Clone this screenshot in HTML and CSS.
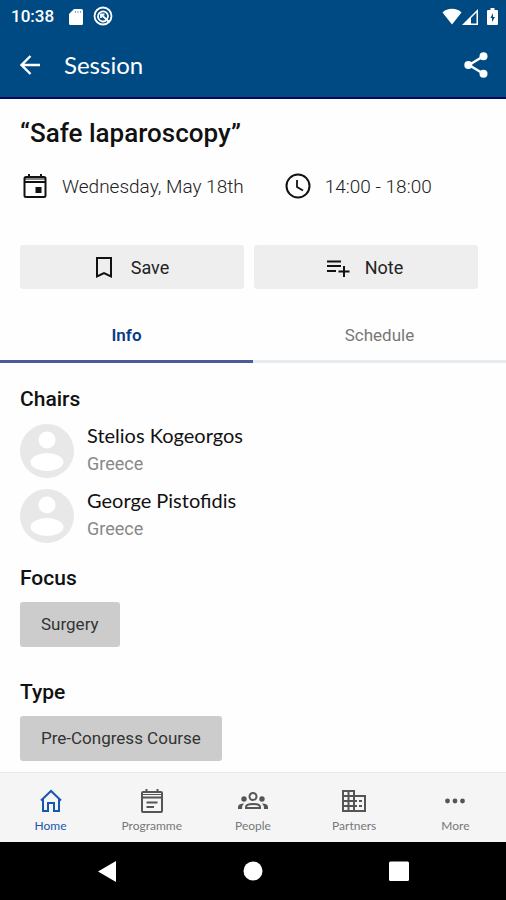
FILE: index.html
```html
<!DOCTYPE html>
<html lang="en">
<head>
<meta charset="utf-8">
<meta name="viewport" content="width=device-width, initial-scale=1">
<title>Session</title>
<link rel="stylesheet" href="styles.css">
</head>
<body>
<div class="app">
  <header class="header">
    <div class="status">
      <span class="status-time">10:38</span>
      <svg class="status-card" viewBox="0 0 14 17" aria-hidden="true"><path fill="currentColor" d="M5 1h7.500q1.500 0 1.500 1.500v13q0 1.500-1.500 1.500h-11Q0 17 0 15.500V6z"/><path stroke="#8aa9c6" d="M6.500 3v2M9 3v2M11.500 3v2"/></svg>
      <svg class="status-ring" viewBox="0 0 20 20" fill="none" stroke="currentColor" aria-hidden="true"><circle cx="10" cy="10" r="8.500" stroke-width="1.800"/><path stroke-width="1.800" d="M13 14.500A5 5 0 1 1 15 10q0 2-1.500 3.500L8 8.500"/><path stroke-width="1.800" d="M8 12V8.500h3.500M13 13l3 3"/></svg>
      <svg class="status-wifi" viewBox="0 0 20 17" aria-hidden="true"><path fill="currentColor" d="M10 16.500L.5 4.500C3 2 6 .8 10 .8s7 1.200 9.500 3.700z"/></svg>
      <svg class="status-signal" viewBox="0 0 17 17" aria-hidden="true"><path fill="currentColor" fill-rule="evenodd" d="M0 17L16 1v16zM9 10v5.500h5.500V4.500z"/></svg>
      <svg class="status-battery" viewBox="0 0 11 17" aria-hidden="true"><path fill="currentColor" fill-rule="evenodd" d="M3.500 0h4v2H10q1 0 1 1v13q0 1-1 1H1q-1 0-1-1V3q0-1 1-1h2.500zM6 5L3.500 10H5v4l3-5H6z"/></svg>
    </div>
    <div class="appbar">
      <button class="icon-button" type="button" aria-label="Back"><svg class="icon-back" viewBox="0 0 24 24" aria-hidden="true"><path fill="none" stroke="currentColor" stroke-width="2.400" d="M22 12H4M12.500 3L3.500 12l9 9"/></svg></button>
      <h1 class="appbar-title">Session</h1>
      <button class="icon-button share" type="button" aria-label="Share"><svg class="icon-share" viewBox="0 0 24 26" aria-hidden="true"><path fill="none" stroke="currentColor" stroke-width="2.400" d="M19 4.500L5 13l14 8.500"/><g fill="currentColor"><circle cx="19.500" cy="4.300" r="4"/><circle cx="4.300" cy="13" r="4"/><circle cx="19.500" cy="21.700" r="4"/></g></svg></button>
    </div>
  </header>

  <main>
    <section class="intro">
      <h2 class="title">“Safe laparoscopy”</h2>
      <div class="meta">
        <div class="meta-item"><svg class="icon" viewBox="0 0 24 26" aria-hidden="true"><path fill="none" stroke="currentColor" stroke-width="2" d="M3 4h18q1.500 0 1.500 1.500v17Q22.500 24 21 24H3q-1.500 0-1.500-1.500v-17Q1.500 4 3 4zM1.500 9h21M6 1v3M18 1v3"/><path stroke="currentColor" d="M2 6h20"/><path fill="currentColor" d="M12.500 14h6v6h-6z"/></svg><time>Wednesday, May 18th</time></div>
        <div class="meta-item"><svg class="icon" viewBox="0 0 26 26" fill="none" stroke="currentColor" aria-hidden="true"><circle cx="13" cy="13" r="11.500" stroke-width="2"/><path stroke-width="1.800" d="M12 7v7l6 3.500"/></svg><span>14:00 - 18:00</span></div>
      </div>
      <div class="actions">
        <button class="action" type="button"><svg class="icon" viewBox="0 0 26 26" aria-hidden="true"><path fill="none" stroke="currentColor" stroke-width="2" d="M6 4h14v18.500l-7-3.500-7 3.500z"/></svg>Save</button>
        <button class="action" type="button"><svg class="icon" viewBox="0 0 26 26" aria-hidden="true"><path fill="none" stroke="currentColor" stroke-width="2" d="M2 7.500h14M2 12h14M2 17h9M19 12v11M13.500 17.500h11"/></svg>Note</button>
      </div>
    </section>

    <div class="tabs" role="tablist">
      <button class="tab active" type="button" role="tab" aria-selected="true">Info</button>
      <button class="tab" type="button" role="tab" aria-selected="false">Schedule</button>
    </div>

    <div class="details">
      <section>
        <h3 class="heading">Chairs</h3>
        <ul class="people">
          <li class="person"><svg class="avatar" viewBox="0 0 54 54" aria-hidden="true"><circle cx="27" cy="27" r="27" fill="#e8e8e8"/><circle cx="27" cy="16" r="8.500" fill="#fff"/><ellipse cx="27" cy="38" rx="16.500" ry="9" fill="#fff"/></svg><div><div class="name">Stelios Kogeorgos</div><div class="country">Greece</div></div></li>
          <li class="person"><svg class="avatar" viewBox="0 0 54 54" aria-hidden="true"><circle cx="27" cy="27" r="27" fill="#e8e8e8"/><circle cx="27" cy="16" r="8.500" fill="#fff"/><ellipse cx="27" cy="38" rx="16.500" ry="9" fill="#fff"/></svg><div><div class="name">George Pistofidis</div><div class="country">Greece</div></div></li>
        </ul>
      </section>
      <section class="group">
        <h3 class="heading">Focus</h3>
        <span class="chip">Surgery</span>
      </section>
      <section class="group">
        <h3 class="heading">Type</h3>
        <span class="chip">Pre-Congress Course</span>
      </section>
    </div>
  </main>

  <footer>
    <nav class="nav">
      <a class="nav-item current" href="#"><svg class="nav-icon" viewBox="0 0 26 26" aria-hidden="true"><path fill="none" stroke="currentColor" stroke-width="2" d="M3 12.500L13 3l10 9.500M5 11v12h5v-8h6v8h5V11"/></svg>Home</a>
      <a class="nav-item" href="#"><svg class="nav-icon" viewBox="0 0 26 26" fill="none" stroke="currentColor" stroke-width="2" aria-hidden="true"><path d="M4 4h18q1 0 1 1v18q0 1-1 1H4q-1 0-1-1V5q0-1 1-1zM3 9.500h20M7.500 1v3M18.500 1v3M7.500 14.500h11M7.500 19h7.500"/><path stroke-width="1" d="M4 6.500h18"/></svg>Programme</a>
      <a class="nav-item" href="#"><svg class="nav-icon nav-icon-wide" viewBox="0 0 30 26" aria-hidden="true"><g fill="none" stroke="currentColor" stroke-width="2"><circle cx="15" cy="8.500" r="3.500"/><path d="M8 20v-1q0-3 7-3t7 3v1z"/></g><g fill="currentColor"><circle cx="6" cy="11" r="2.700"/><circle cx="24" cy="11" r="2.700"/><path d="M6 15.500q-2 1.500-2 5.500H0v-2q0-3.500 6-3.500zM24 15.500q2 1.500 2 5.500h4v-2q0-3.500-6-3.500z"/></g></svg>People</a>
      <a class="nav-item" href="#"><svg class="nav-icon" viewBox="0 0 26 26" fill="none" stroke="currentColor" stroke-width="2" aria-hidden="true"><path d="M2 3h11v20H2zM13 8h11v15H13M2 8h11M2 13h14M2 18h14M7.500 3v20M18 13h3M18 18h3"/></svg>Partners</a>
      <a class="nav-item" href="#"><svg class="nav-icon" viewBox="0 0 26 26" fill="currentColor" aria-hidden="true"><circle cx="5.500" cy="13" r="2.400"/><circle cx="13" cy="13" r="2.400"/><circle cx="20.500" cy="13" r="2.400"/></svg>More</a>
    </nav>
    <div class="system">
      <button class="system-button" type="button" aria-label="System back"><svg class="system-icon" viewBox="0 0 22 22" aria-hidden="true"><path fill="#fff" d="M20 1v21L2 11.500z"/></svg></button>
      <button class="system-button" type="button" aria-label="System home"><svg class="system-icon" viewBox="0 0 22 22" aria-hidden="true"><circle cx="11" cy="11" r="9.500" fill="#fff"/></svg></button>
      <button class="system-button" type="button" aria-label="Recent apps"><svg class="system-icon" viewBox="0 0 22 22" aria-hidden="true"><rect x="1" y="1.500" width="20" height="19.500" rx="1.500" fill="#fff"/></svg></button>
    </div>
  </footer>
</div>
</body>
</html>
```
FILE: styles.css
```css
* {
  box-sizing: border-box;
}

body,
h1,
h2,
h3,
ul {
  margin: 0;
  padding: 0;
}

body {
  background: #fefefe;
  color: #111;
  font-family: Roboto, "Liberation Sans", sans-serif;
  font-size: 17px;
}

button {
  border: 0;
  padding: 0;
  background: none;
  color: inherit;
  font: inherit;
}

svg {
  display: block;
  flex: none;
}

.app {
  display: flex;
  flex-direction: column;
  min-height: 100vh;
}

main {
  flex: 1;
}

.header {
  background: #004a83;
  border-bottom: 2px solid #00085f;
  color: #fff;
}

.status {
  display: flex;
  align-items: center;
  height: 32px;
  padding: 0 8px 0 11px;
}

.status-time {
  font-weight: 500;
}

.status-card {
  width: 14px;
  height: 17px;
  margin-left: 15px;
}

.status-ring {
  width: 20px;
  height: 20px;
  margin-left: 10px;
}

.status-wifi {
  width: 20px;
  height: 17px;
  margin-left: auto;
}

.status-signal {
  width: 17px;
  height: 17px;
}

.status-battery {
  width: 11px;
  height: 17px;
  margin-left: 8px;
}

.appbar {
  display: flex;
  align-items: center;
  height: 65px;
  padding: 0 18px;
}

.icon-back {
  width: 24px;
  height: 24px;
}

.icon-share {
  width: 24px;
  height: 26px;
}

.share {
  margin-left: auto;
}

.appbar-title {
  margin-left: 22px;
  font-family: Lato, "Noto Sans", sans-serif;
  font-size: 24px;
  font-weight: 400;
}

.intro {
  padding: 16px 28px 0 20px;
}

.title {
  font-size: 26px;
  font-weight: 500;
  line-height: 36px;
}

.meta {
  display: flex;
  gap: 41px;
  margin-top: 19px;
  padding-left: 2px;
  color: #222;
  font-size: 19px;
  font-weight: 300;
}

.meta-item {
  display: flex;
  align-items: center;
  gap: 14px;
  height: 32px;
}

.icon {
  width: 26px;
  height: 26px;
  color: #111;
}

.actions {
  display: grid;
  grid-template-columns: 1fr 1fr;
  gap: 10px;
  margin-top: 43px;
}

.action {
  display: flex;
  align-items: center;
  justify-content: center;
  gap: 14px;
  height: 44px;
  padding-right: 4px;
  border-radius: 3px;
  background: #eee;
  color: #222;
  font-size: 18px;
}

.tabs {
  display: grid;
  grid-template-columns: 1fr 1fr;
  margin-top: 21px;
}

.tab {
  height: 53px;
  border-bottom: 3px solid #e6ecef;
  color: #777;
}

.tab.active {
  border-color: #4b5a9a;
  color: #0a3b86;
  font-weight: 600;
}

.details {
  padding: 23px 20px 10px;
}

.heading {
  font-size: 21px;
  font-weight: 500;
  line-height: 26px;
}

.people {
  display: grid;
  gap: 8px;
  margin-top: 10px;
  list-style: none;
}

.person {
  display: flex;
  align-items: flex-start;
  gap: 13px;
}

.avatar {
  width: 54px;
  height: 54px;
  margin-top: 2px;
}

.name {
  font-family: Lato, "Noto Sans", sans-serif;
  font-size: 20px;
  line-height: 27px;
}

.country {
  color: #888;
  font-size: 18px;
  line-height: 30px;
}

.group {
  display: flex;
  flex-direction: column;
  align-items: flex-start;
  gap: 11px;
  margin-top: 21px;
}

.group + .group {
  margin-top: 32px;
}

.chip {
  padding: 0 21px;
  border-radius: 3px;
  background: #ccc;
  color: #333;
  line-height: 45px;
}

.nav {
  display: grid;
  grid-template-columns: repeat(5, 1fr);
  height: 70px;
  border-top: 1px solid #e9e9e9;
  background: #f5f5f5;
}

.nav-item {
  display: flex;
  flex-direction: column;
  align-items: center;
  padding-top: 15px;
  color: #777;
  font-family: Lato, "Noto Sans", sans-serif;
  font-size: 12px;
  line-height: 24px;
  text-decoration: none;
}

.nav-item.current {
  color: #1757b0;
}

.nav-icon {
  width: 26px;
  height: 26px;
  color: #555;
}

.current .nav-icon {
  color: #1757b0;
}

.nav-icon-wide {
  width: 30px;
}

.system {
  display: flex;
  align-items: center;
  justify-content: center;
  gap: 124px;
  height: 58px;
  background: #000;
}

.system-icon {
  width: 22px;
  height: 22px;
}
```
